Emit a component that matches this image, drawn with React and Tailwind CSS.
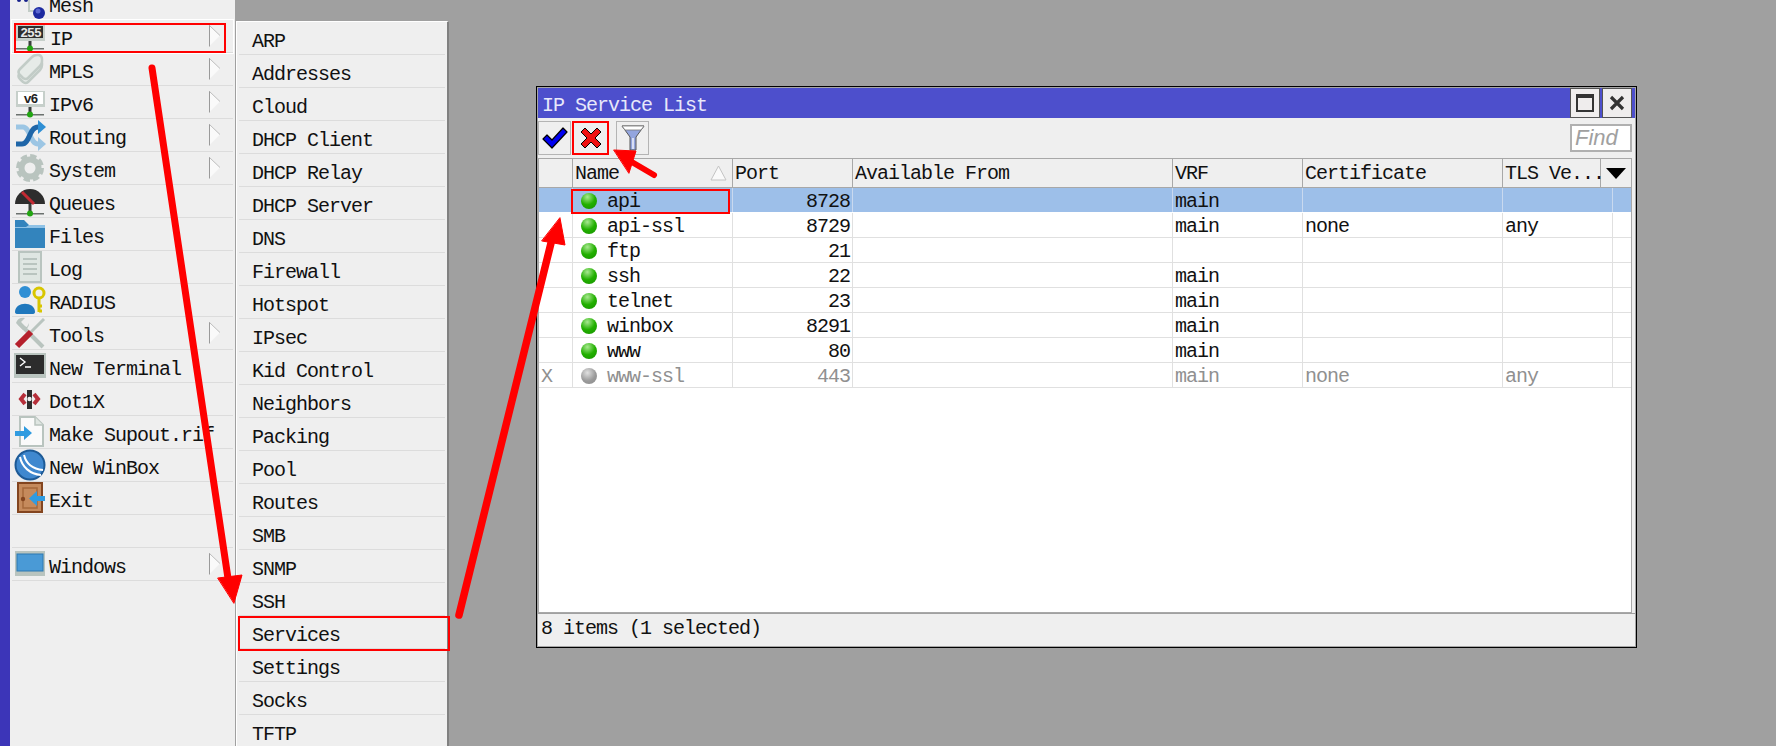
const menuRows = [
  { label: 'IP', icon: 'ip', arrow: true },
  { label: 'MPLS', icon: 'mpls', arrow: true },
  { label: 'IPv6', icon: 'ipv6', arrow: true },
  { label: 'Routing', icon: 'routing', arrow: true },
  { label: 'System', icon: 'system', arrow: true },
  { label: 'Queues', icon: 'queues' },
  { label: 'Files', icon: 'files' },
  { label: 'Log', icon: 'log' },
  { label: 'RADIUS', icon: 'radius' },
  { label: 'Tools', icon: 'tools', arrow: true },
  { label: 'New Terminal', icon: 'terminal' },
  { label: 'Dot1X', icon: 'dot1x' },
  { label: 'Make Supout.rif', icon: 'supout' },
  { label: 'New WinBox', icon: 'winbox' },
  { label: 'Exit', icon: 'exit' },
  { label: '', icon: null },
  { label: 'Windows', icon: 'windows', arrow: true },
]

const subItems = [
  'ARP', 'Addresses', 'Cloud', 'DHCP Client', 'DHCP Relay', 'DHCP Server', 'DNS', 'Firewall', 'Hotspot',
  'IPsec', 'Kid Control', 'Neighbors', 'Packing', 'Pool', 'Routes', 'SMB', 'SNMP', 'SSH', 'Services',
  'Settings', 'Socks', 'TFTP',
]

const services = [
  { name: 'api', port: '8728', vrf: 'main', cert: '', tls: '', selected: true },
  { name: 'api-ssl', port: '8729', vrf: 'main', cert: 'none', tls: 'any' },
  { name: 'ftp', port: '21', vrf: '', cert: '', tls: '' },
  { name: 'ssh', port: '22', vrf: 'main', cert: '', tls: '' },
  { name: 'telnet', port: '23', vrf: 'main', cert: '', tls: '' },
  { name: 'winbox', port: '8291', vrf: 'main', cert: '', tls: '' },
  { name: 'www', port: '80', vrf: 'main', cert: '', tls: '' },
  { name: 'www-ssl', port: '443', vrf: 'main', cert: 'none', tls: 'any', disabled: true },
]

function SignIcon({ text, dark }) {
  return (
    <svg width="32" height="32" viewBox="0 0 32 32">
      <rect x="14.5" y="20" width="3" height="9" fill="#3a3f3c" />
      <rect x="2" y="28" width="28" height="1.5" fill="#6b716e" />
      <rect x="2" y="5" width="29" height="16" fill="#c6cfca" />
      <rect x="4" y="6" width="25" height="12" fill={dark ? '#2e2e2e' : '#ffffff'} />
      <text x="16.5" y="16.5" textAnchor="middle" fontSize="13" fontWeight="700" fontFamily="Liberation Mono" fill={dark ? '#e8e8e8' : '#222'}>{text}</text>
      <circle cx="16" cy="28.5" r="3" fill="#22a512" />
    </svg>
  )
}

function MenuIcon({ name }) {
  if (name === 'ip') return <SignIcon text="255" dark />
  if (name === 'ipv6') return <SignIcon text="v6" />
  const icons = {
    mpls: (
      <g fill="#e6ebe8" stroke="#c2ccc7" strokeWidth="2.5">
        <path d="M6 20 L18 8 Q20 6 23 6 L25 6 Q28 7 28 10 L28 12 Q28 15 26 17 L14 29 Q12 31 9 29 L6 26 Q3 23 6 20 Z" />
        <path d="M6 16 L18 4 Q20 2 23 2 L25 2 Q28 3 28 6 L28 8 Q28 11 26 13 L14 25 Q12 27 9 25 L6 22 Q3 19 6 16 Z" />
      </g>
    ),
    routing: (
      <g fill="none">
        <path d="M2 8 H9 C16 8 16 25 24 25 H26" stroke="#9cc6e4" strokeWidth="5" />
        <path d="M24 18 L32 25 L24 32 Z" fill="#9cc6e4" />
        <path d="M2 25 H8 C16 25 15 8 24 8 H26" stroke="#1f66a8" strokeWidth="5" />
        <path d="M24 1 L32 8 L24 15 Z" fill="#2f8fd4" />
      </g>
    ),
    system: (
      <g>
        <circle cx="16" cy="16" r="11.5" fill="none" stroke="#b9c4bf" strokeWidth="5" strokeDasharray="6 3" />
        <circle cx="16" cy="16" r="8.5" fill="none" stroke="#b9c4bf" strokeWidth="6" />
      </g>
    ),
    queues: (
      <g>
        <path d="M1 19 A15 15 0 0 1 31 19 Z" fill="#2d2d2d" />
        <rect x="14.5" y="19" width="3" height="9" fill="#3a3f3c" />
        <rect x="2" y="28" width="28" height="1.5" fill="#6b716e" />
        <path d="M8 7 L20 19" stroke="#c22a33" strokeWidth="3" />
        <circle cx="16" cy="28.5" r="3" fill="#22a512" />
      </g>
    ),
    files: (
      <g>
        <path d="M1 2 H10 L15 7 H31 V30 H1 Z" fill="#3384bd" />
        <path d="M1 9 H12 L15 7 H31 V10 H1 Z" fill="#8fc2e6" />
      </g>
    ),
    log: (
      <g>
        <path d="M5 1 H27 V31 H5 Z" fill="#dfe6e2" stroke="#b9c4bf" strokeWidth="2" />
        <path d="M9 8 H23 M9 13 H23 M9 18 H23 M9 23 H23" stroke="#b9c4bf" strokeWidth="2" />
      </g>
    ),
    radius: (
      <g>
        <circle cx="11" cy="8" r="6" fill="#2f8fd4" />
        <path d="M1 28 C1 17 21 17 21 28 Q21 30 18 30 H4 Q1 30 1 28 Z" fill="#1f78bd" />
        <circle cx="25" cy="9" r="5" fill="none" stroke="#d8c600" strokeWidth="3" />
        <path d="M25 14 V28 M25 22 H28 M25 27 H28" stroke="#d8c600" strokeWidth="3" />
      </g>
    ),
    tools: (
      <g>
        <path d="M5 6 L29 30" stroke="#b9c4bf" strokeWidth="4" />
        <path d="M2 6 Q4 0 11 1 L7 5 L9 9 L13 10 L15 6 Q15 12 9 13 Z" fill="#b9c4bf" />
        <path d="M30 2 L14 18" stroke="#b9c4bf" strokeWidth="3" />
        <path d="M17 15 L3 29" stroke="#b5202c" strokeWidth="6" />
      </g>
    ),
    terminal: (
      <g>
        <rect x="1" y="4" width="30" height="21" fill="#2c2c2c" stroke="#b9c4bf" strokeWidth="2" />
        <rect x="0" y="25" width="32" height="3" fill="#b9c4bf" />
        <path d="M6 8 L11 12 L6 16 M11 17 H17" stroke="#fff" strokeWidth="1.4" fill="none" />
      </g>
    ),
    dot1x: (
      <g>
        <path d="M11 11 L7 16 L11 21 M20 11 L24 16 L20 21" stroke="#b62f3a" strokeWidth="4" fill="none" />
        <rect x="13" y="7" width="5" height="19" fill="#2d2d2d" />
        <circle cx="15.5" cy="16" r="2.2" fill="#eee" />
      </g>
    ),
    supout: (
      <g>
        <path d="M6 1 H21 L29 9 V30 H6 Z" fill="#fafafa" stroke="#b9c4bf" strokeWidth="2" />
        <path d="M21 1 V9 H29" fill="#dfe6e2" stroke="#b9c4bf" strokeWidth="1.5" />
        <path d="M1 15 H10 V10 L18 17 L10 24 V20 H1 Z" fill="#2f9be0" />
      </g>
    ),
    winbox: (
      <g>
        <circle cx="16" cy="16" r="14.5" fill="#3f88cf" stroke="#1d5a96" strokeWidth="2" />
        <path d="M6 8 C8 18 16 25 27 26 M10 6 C12 14 18 20 29 21" stroke="#fff" strokeWidth="2" fill="none" />
      </g>
    ),
    exit: (
      <g>
        <rect x="4" y="1" width="24" height="29" fill="#c58a5c" stroke="#83451f" strokeWidth="2" />
        <rect x="9" y="6" width="14" height="20" fill="none" stroke="#a5683a" strokeWidth="1.5" />
        <circle cx="9" cy="17" r="2.2" fill="#83451f" />
        <path d="M31 14 H23 V9 L15 16.5 L23 24 V19 H31 Z" fill="#2f9be0" />
      </g>
    ),
    windows: (
      <g>
        <rect x="1" y="3" width="30" height="25" fill="#b9c4bf" />
        <rect x="3" y="6" width="26" height="17" fill="#4a9ad6" stroke="#2c78b2" strokeWidth="1" />
      </g>
    ),
  }
  return (
    <svg width="32" height="32" viewBox="0 0 32 32">
      {icons[name]}
    </svg>
  )
}

function SubArrow() {
  return (
    <svg width="12" height="22" viewBox="0 0 12 22" className="ml-auto mr-[12px] shrink-0">
      <path d="M0.5 0.5 L11 10.5 L0.5 21 Z" fill="#fafafa" />
      <path d="M0.5 0 V21.5" stroke="#9a9a9a" />
      <path d="M0.5 0.5 L11 10.5" stroke="#bdbdbd" />
    </svg>
  )
}

function MenuRow({ row }) {
  return (
    <div className={`relative flex h-[33px] shrink-0 items-center border-b border-[#dcdcdc] pl-[2px] ${row.label === 'IP' ? 'outline outline-white' : ''}`}>
      <div className="flex h-[32px] w-[32px] shrink-0 items-center justify-center">
        {row.icon && <MenuIcon name={row.icon} />}
      </div>
      <span className={`whitespace-nowrap pt-[8px] ${row.label === 'IP' ? 'ml-[4px]' : 'ml-[3px]'}`}>{row.label}</span>
      {row.arrow && <SubArrow />}
      {row.label === 'IP' && <div className="absolute left-[2px] top-[3px] h-[30px] w-[212px] border-2 border-[#ff0000]" />}
    </div>
  )
}

function Sidebar() {
  return (
    <div className="flex h-full w-[235px] shrink-0">
      <div className="w-[10px] shrink-0 bg-[#3c35b8]" />
      <div className="flex flex-1 flex-col bg-[#efefef] px-[2px]">
        {/* Mesh row is cut off by the top of the shot */}
        <div className="relative -mt-[13px] flex h-[33px] shrink-0 items-center border-b border-[#a8a8a8] pl-[2px]">
          <svg width="32" height="32" viewBox="0 0 32 32" className="shrink-0">
            <path d="M15 10 V24 H20" stroke="#c2ccc7" strokeWidth="2" fill="none" />
            <circle cx="5" cy="13" r="2" fill="#16208c" />
            <circle cx="12" cy="13" r="2" fill="#16208c" />
            <circle cx="25" cy="26" r="6" fill="#1d2aa0" />
            <circle cx="24" cy="24" r="2.5" fill="#5a66d0" />
          </svg>
          <span className="ml-[3px] pt-[8px]">Mesh</span>
        </div>
        {menuRows.map((row, i) => <MenuRow key={i} row={row} />)}
      </div>
    </div>
  )
}

function SubMenu() {
  return (
    <div className="ml-[1px] mt-[21px] flex h-[725px] w-[213px] shrink-0 flex-col border-l border-t border-r-2 border-l-white border-t-white border-r-[#808080] bg-[#efefef] px-[2px]">
      {subItems.map(item => (
        <div key={item} className="relative flex h-[33px] shrink-0 items-center border-b border-[#dcdcdc] pl-[13px] pt-[8px]">
          <span className="whitespace-nowrap">{item}</span>
          {item === 'Services' && <div className="absolute -left-px top-0 h-[35px] w-[212px] border-2 border-[#ff0000]" />}
        </div>
      ))}
    </div>
  )
}

function Dot({ gray }) {
  return (
    <span className={`mt-px h-[16px] w-[16px] shrink-0 rounded-full ${gray
      ? 'bg-[radial-gradient(circle_at_40%_30%,#e0e0e0,#9a9a9a_55%,#8a8a8a)]'
      : 'bg-[radial-gradient(circle_at_40%_25%,#a8e890,#22b000_50%,#169000)]'}`}
    />
  )
}

function ServiceRow({ s }) {
  const line = s.selected ? 'border-[#c9d9ef]' : 'border-[#e0e0e0]'
  const text = s.disabled ? 'text-[#909090]' : 'text-[#111]'
  return (
    <div className={`flex h-[25px] shrink-0 border-b leading-[28px] ${s.selected ? 'border-b-white bg-[#9dbfe9]' : 'border-b-[#e0e0e0]'} ${text}`}>
      <div className={`w-[34px] shrink-0 border-r pl-[2px] ${line}`}>{s.disabled ? 'X' : ''}</div>
      <div className={`relative flex w-[160px] shrink-0 items-center gap-[10px] border-r pl-[8px] ${line}`}>
        <Dot gray={s.disabled} />
        <span className="pt-[4px]">{s.name}</span>
        {s.selected && <div className="absolute -left-[2px] top-px h-[25px] w-[159px] border-2 border-[#ff0000]" />}
      </div>
      <div className={`w-[120px] shrink-0 border-r pr-[2px] text-right ${line}`}>{s.port}</div>
      <div className={`w-[320px] shrink-0 border-r ${line}`} />
      <div className={`w-[130px] shrink-0 border-r pl-[2px] ${line}`}>{s.vrf}</div>
      <div className={`w-[200px] shrink-0 border-r pl-[2px] ${line}`}>{s.cert}</div>
      <div className={`w-[110px] shrink-0 border-r pl-[2px] ${line}`}>{s.tls}</div>
      <div className="flex-1" />
    </div>
  )
}

function HeaderCell({ width, children }) {
  return (
    <div className={`relative flex shrink-0 items-center whitespace-nowrap border-r border-[#a8a8a8] pl-[2px] pt-[2px] ${width}`}>{children}</div>
  )
}

function ServiceWindow() {
  return (
    <div className="ml-[87px] mt-[86px] h-[562px] w-[1101px] shrink-0 border border-black bg-[#a6a6a6] p-px">
      <div className="flex h-full flex-col bg-[#efefef]">
        {/* Title bar */}
        <div className="flex h-[30px] shrink-0 items-center bg-[#4d4fcc] pl-[4px] pr-[3px]">
          <span className="pt-[6px] text-[#e8e8fa]">IP Service List</span>
          <button className="ml-auto flex h-[30px] w-[30px] items-center justify-center border border-[#555] bg-[#efeded]">
            <span className="h-[18px] w-[18px] border-2 border-t-4 border-[#333]" />
          </button>
          <button className="ml-[2px] flex h-[30px] w-[30px] items-center justify-center border border-[#555] bg-[#efeded]">
            <svg width="16" height="16" viewBox="0 0 16 16"><path d="M2 2 L14 14 M14 2 L2 14" stroke="#333" strokeWidth="3.2" /></svg>
          </button>
        </div>

        {/* Toolbar */}
        <div className="flex h-[40px] shrink-0 items-center pr-[3px]">
          <button className="flex h-[34px] w-[33px] items-center justify-center border border-[#b4b4b4]">
            <svg width="26" height="22" viewBox="0 0 26 22">
              <path d="M1 12 L5 8 L10 13 L21 1 L25 5 L10 21 Z" fill="#0000f0" stroke="#000" strokeWidth="1.2" strokeLinejoin="round" />
            </svg>
          </button>
          <button className="ml-px flex h-[34px] w-[37px] items-center justify-center border-2 border-[#ff0000]">
            <svg width="22" height="22" viewBox="0 0 22 22">
              <path d="M5 1 L11 7 L17 1 L21 5 L15 11 L21 17 L17 21 L11 15 L5 21 L1 17 L7 11 L1 5 Z" fill="#f01010" stroke="#000" strokeWidth="1" strokeLinejoin="round" />
            </svg>
          </button>
          <button className="ml-[7px] flex h-[34px] w-[33px] items-center justify-center border border-[#b4b4b4]">
            <svg width="24" height="26" viewBox="0 0 24 26">
              <path d="M1 1 H23 L15 12 V25 H9 V12 Z" fill="#93a5de" stroke="#555" strokeWidth="1" />
              <path d="M1 1 H23 L20 5 H4 Z" fill="#fff" stroke="#777" strokeWidth="0.8" />
              <path d="M11 13 H13 V24 H11 Z" fill="#d8def4" />
            </svg>
          </button>
          <div className="ml-auto flex h-[28px] w-[62px] items-center border-2 border-[#b0b0b0] bg-white pl-[3px] font-['Liberation_Sans',sans-serif] text-[22px] italic tracking-normal text-[#a0a0a0]">
            Find
          </div>
        </div>

        {/* Table */}
        <div className="mr-[3px] flex min-h-0 flex-1 flex-col border border-[#a8a8a8] bg-white">
          <div className="flex h-[29px] shrink-0 border-b border-[#a8a8a8] bg-[#efefef]">
            <HeaderCell width="w-[34px]" />
            <HeaderCell width="w-[160px]">
              Name
              <svg width="17" height="16" viewBox="0 0 17 16" className="absolute left-[137px] top-[6px]">
                <path d="M8.5 1 L16 15 H1 Z" fill="#fafafa" stroke="#c4c4c4" />
              </svg>
            </HeaderCell>
            <HeaderCell width="w-[120px]">Port</HeaderCell>
            <HeaderCell width="w-[320px]">Available From</HeaderCell>
            <HeaderCell width="w-[130px]">VRF</HeaderCell>
            <HeaderCell width="w-[200px]">Certificate</HeaderCell>
            <HeaderCell width="w-[98px]">TLS Ve...</HeaderCell>
            <div className="flex flex-1 items-center justify-center">
              <svg width="20" height="11" viewBox="0 0 20 11"><path d="M0 0 H20 L10 11 Z" fill="#000" /></svg>
            </div>
          </div>
          {services.map(s => <ServiceRow key={s.name} s={s} />)}
        </div>

        {/* Status bar */}
        <div className="flex h-[33px] shrink-0 items-center border-t border-[#a0a0a0] pb-[2px] pl-[3px]">8 items (1 selected)</div>
      </div>
    </div>
  )
}

function Arrows() {
  return (
    <svg width="1776" height="746" viewBox="0 0 1776 746" className="pointer-events-none absolute left-0 top-0">
      <g fill="#ff0000" stroke="#ff0000" strokeLinecap="round" strokeLinejoin="round">
        <path d="M152 68 L229 585" strokeWidth="7" fill="none" />
        <path d="M218 578 L242 575 L234 603 Z" strokeWidth="1" />
        <path d="M459 615 L553 235" strokeWidth="7.5" fill="none" />
        <path d="M542 241 L565 245 L560 218 Z" strokeWidth="1" />
        <path d="M654 175 L625 158" strokeWidth="6" fill="none" />
        <path d="M614 150 L636 151 L629 173 Z" strokeWidth="1" />
      </g>
    </svg>
  )
}

export default function App() {
  return (
    <div className="relative flex h-[746px] w-[1776px] overflow-hidden bg-[#a0a0a0] font-['Liberation_Mono',monospace] text-[20px] leading-[24px] tracking-[-1px] text-[#111]">
      <Sidebar />
      <SubMenu />
      <ServiceWindow />
      <Arrows />
    </div>
  )
}
